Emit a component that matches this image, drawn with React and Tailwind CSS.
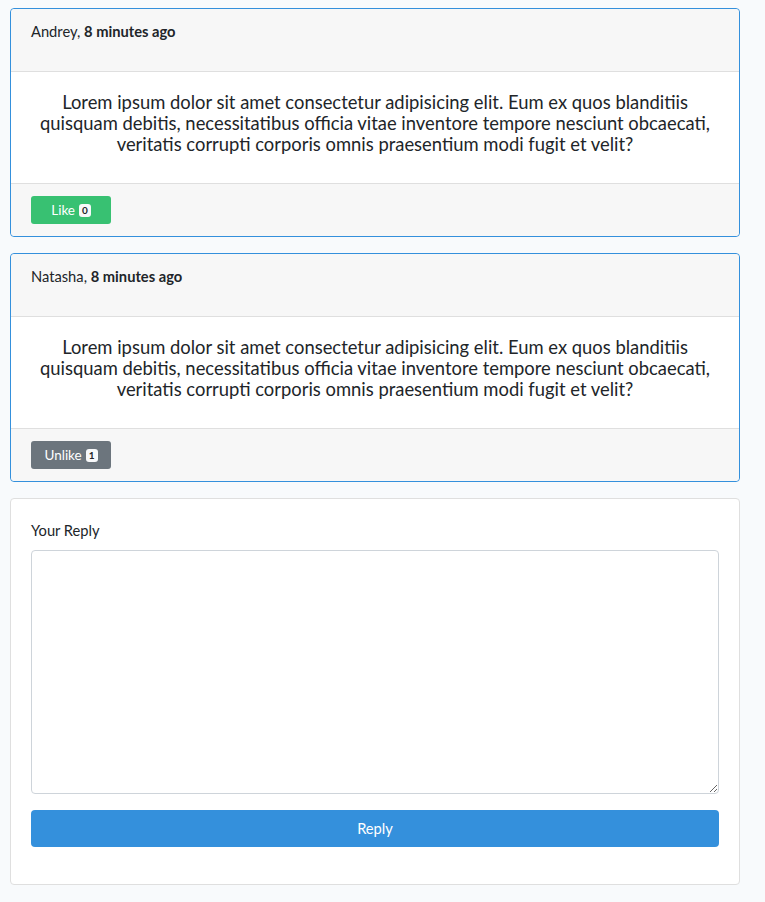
import React from 'react';

const posts = [
  { author: 'Andrey', time: '8 minutes ago', liked: false, likes: 0 },
  { author: 'Natasha', time: '8 minutes ago', liked: true, likes: 1 },
];

const body =
  'Lorem ipsum dolor sit amet consectetur adipisicing elit. Eum ex quos blanditiis quisquam debitis, necessitatibus officia vitae inventore tempore nesciunt obcaecati, veritatis corrupti corporis omnis praesentium modi fugit et velit?';

function Post({ post }) {
  return (
    <div className="mb-4 rounded border border-[#3490dc] bg-white">
      {/* Header */}
      <div className="h-[63px] rounded-t border-b border-[#dfdfdf] bg-[#f7f7f7] px-5 pt-[11px]">
        <p className="text-[14.7px] leading-[23px]">
          {post.author}, <strong className="font-bold">{post.time}</strong>
        </p>
      </div>

      {/* Body */}
      <div className="h-[111px] px-5 pt-5">
        <h5 className="text-center text-[18.4px] leading-[21px]">{body}</h5>
      </div>

      {/* Footer */}
      <div className="h-[53px] rounded-b border-t border-[#dfdfdf] bg-[#f7f7f7] px-5 pt-3">
        <button
          className={`flex h-[28px] w-[80px] items-center justify-center gap-1 rounded-[3px] text-[13.5px] text-white ${
            post.liked ? 'bg-[#6c757d]' : 'bg-[#38c172]'
          }`}
        >
          {post.liked ? 'Unlike' : 'Like'}
          <span className="rounded-[3px] bg-[#f8f9fa] px-[3px] text-[10px] font-bold leading-[13px] text-[#212529]">
            {post.likes}
          </span>
        </button>
      </div>
    </div>
  );
}

export default function App() {
  return (
    <div
      className="min-h-[902px] bg-[#f8fafc] pt-2 text-[#212529]"
      style={{ fontFamily: '"Lato", "Noto Sans", sans-serif' }}
    >
      <div className="ml-[10px] w-[730px]">
        {posts.map((p, i) => (
          <Post key={i} post={p} />
        ))}

        {/* Reply form */}
        <div className="h-[387px] rounded border border-[#dfdfdf] bg-white p-5">
          <label className="mb-2 block text-[14.7px] leading-[23px]">Your Reply</label>
          <textarea className="block h-[244px] w-full rounded border border-[#ced4da] bg-white px-3 py-1.5 text-[14.4px] outline-none" />
          <button className="mt-4 block h-[37px] w-full rounded bg-[#3490dc] text-[14.7px] text-white">
            Reply
          </button>
        </div>
      </div>
    </div>
  );
}
